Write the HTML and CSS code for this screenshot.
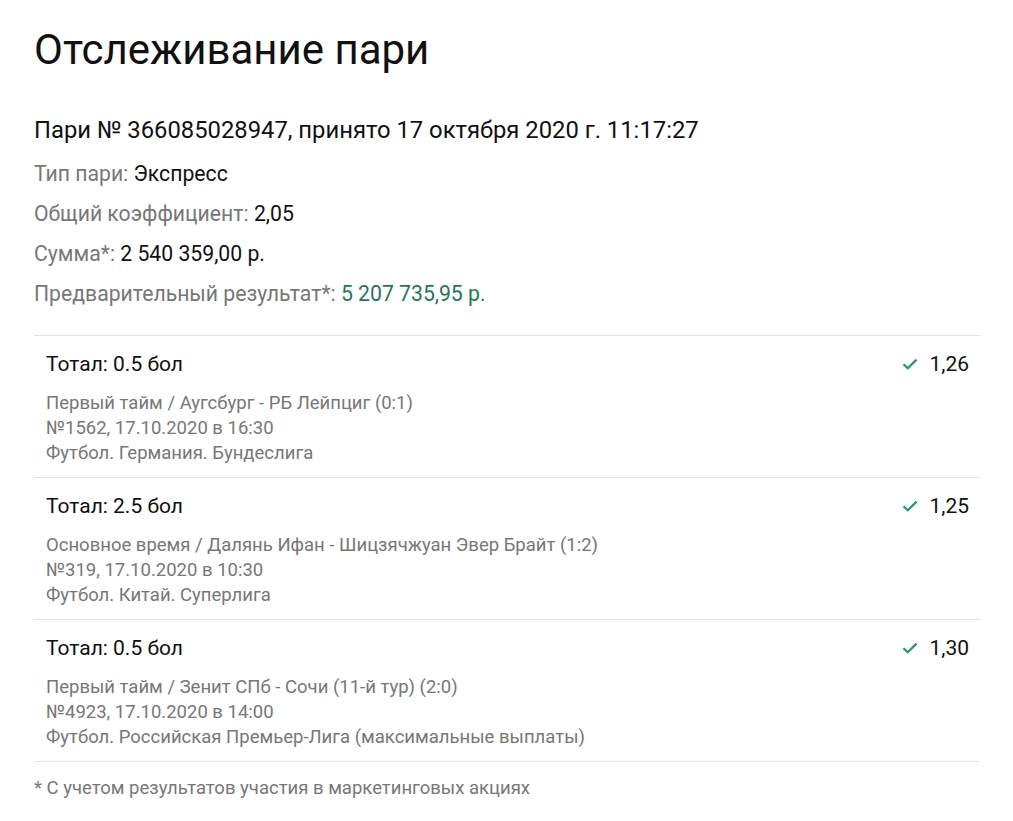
FILE: index.html
```html
<!DOCTYPE html>
<html lang="ru">
<head>
<meta charset="utf-8">
<link rel="stylesheet" href="styles.css">
</head>
<body>
<div class="page">
  <h1 class="title">Отслеживание пари</h1>
  <div class="head">Пари № 366085028947, принято 17 октября 2020 г. 11:17:27</div>
  <div class="info">
    <div class="info-row"><span class="lbl">Тип пари:</span> <span class="val">Экспресс</span></div>
    <div class="info-row"><span class="lbl">Общий коэффициент:</span> <span class="val">2,05</span></div>
    <div class="info-row"><span class="lbl">Сумма*:</span> <span class="val">2 540 359,00 р.</span></div>
    <div class="info-row"><span class="lbl">Предварительный результат*:</span> <span class="val green">5 207 735,95 р.</span></div>
  </div>
  <div class="list">
    <div class="bet">
      <div class="bet-top">
        <span class="bet-name">Тотал: 0.5 бол</span>
        <span class="bet-odd"><svg class="check" viewBox="0 0 16 12" width="16" height="12"><path d="M1.5 6.2 L5.8 10.3 L14.5 1.6" fill="none" stroke="#1f9a6c" stroke-width="2.2"/></svg>1,26</span>
      </div>
      <div class="bet-desc">
        <div>Первый тайм / Аугсбург - РБ Лейпциг (0:1)</div>
        <div>№1562, 17.10.2020 в 16:30</div>
        <div>Футбол. Германия. Бундеслига</div>
      </div>
    </div>
    <div class="bet">
      <div class="bet-top">
        <span class="bet-name">Тотал: 2.5 бол</span>
        <span class="bet-odd"><svg class="check" viewBox="0 0 16 12" width="16" height="12"><path d="M1.5 6.2 L5.8 10.3 L14.5 1.6" fill="none" stroke="#1f9a6c" stroke-width="2.2"/></svg>1,25</span>
      </div>
      <div class="bet-desc">
        <div>Основное время / Далянь Ифан - Шицзячжуан Эвер Брайт (1:2)</div>
        <div>№319, 17.10.2020 в 10:30</div>
        <div>Футбол. Китай. Суперлига</div>
      </div>
    </div>
    <div class="bet">
      <div class="bet-top">
        <span class="bet-name">Тотал: 0.5 бол</span>
        <span class="bet-odd"><svg class="check" viewBox="0 0 16 12" width="16" height="12"><path d="M1.5 6.2 L5.8 10.3 L14.5 1.6" fill="none" stroke="#1f9a6c" stroke-width="2.2"/></svg>1,30</span>
      </div>
      <div class="bet-desc">
        <div>Первый тайм / Зенит СПб - Сочи (11-й тур) (2:0)</div>
        <div>№4923, 17.10.2020 в 14:00</div>
        <div>Футбол. Российская Премьер-Лига (максимальные выплаты)</div>
      </div>
    </div>
  </div>
  <div class="note">* С учетом результатов участия в маркетинговых акциях</div>
</div>
</body>
</html>
```
FILE: styles.css
```css
* { box-sizing: border-box; }
html, body { margin: 0; padding: 0; background: #fff; }
body { font-family: Roboto, "Noto Sans", sans-serif; color: #111; }
.page { padding: 22px 33px 0 34px; width: 1013px; }
.title { margin: 0; font-size: 42px; font-weight: 400; line-height: 56px; color: #111; }
.head { margin-top: 37px; font-size: 23.8px; line-height: 30px; color: #111; }
.info { margin-top: 9px; }
.info-row { font-size: 21.2px; line-height: 40px; }
.lbl { color: #777; }
.val { color: #111; }
.green { color: #1b7a55; }
.list { margin-top: 21px; border-top: 1px solid #e3e3e3; }
.bet { border-bottom: 1px solid #e3e3e3; padding: 13px 11px 11px 12px; }
.bet-top { display: flex; justify-content: space-between; align-items: center; font-size: 21px; line-height: 30px; }
.bet-odd { display: flex; align-items: center; gap: 11px; }
.check { display: block; }
.bet-desc { margin-top: 12px; font-size: 18.5px; line-height: 25px; color: #777; }
.note { margin-top: 14px; font-size: 18.5px; line-height: 24px; color: #777; }
```
